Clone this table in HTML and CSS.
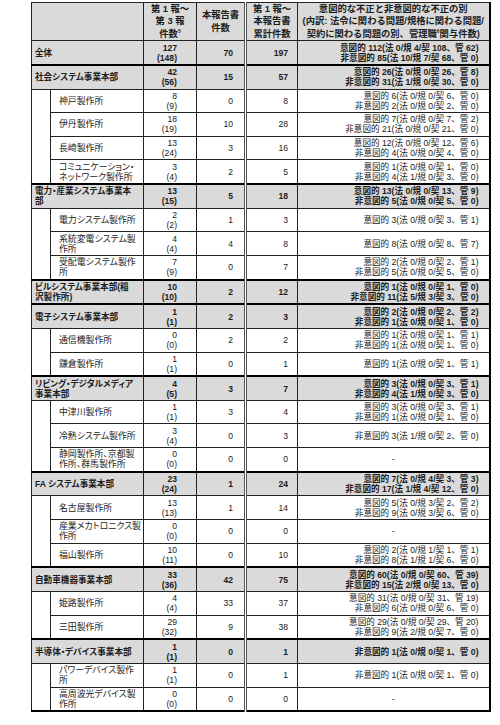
FILE: index.html
```html
<!DOCTYPE html>
<html lang="ja">
<head>
<meta charset="utf-8">
<title>不正件数一覧</title>
<link rel="stylesheet" href="styles.css">
</head>
<body>
<table class="report">
  <colgroup>
    <col class="c-indent"><col class="c-name"><col class="c-n1"><col class="c-n2"><col class="c-n3"><col class="c-det">
  </colgroup>
  <thead>
    <tr class="head">
      <th colspan="2"></th>
      <th>第 1 報～<br>第 3 報<br>件数<sup class="fn">5</sup></th>
      <th>本報告書<br>件数</th>
      <th class="n3">第 1 報～<br>本報告書<br>累計件数</th>
      <th>意図的な不正と非意図的な不正の別<br>(内訳: 法令に関わる問題/規格に関わる問題/<br>契約に関わる問題の別、管理職<sup class="fn">6</sup>関与件数)</th>
    </tr>
  </thead>
  <tbody>
    <tr class="grp">
      <td colspan="2" class="gname">全体</td>
      <td class="n1">127<br>(148)</td><td class="n2">70</td><td class="n3">197</td>
      <td class="det">意図的 112(法 0/規 4/契 108、管 62)<br>非意図的 85(法 10/規 7/契 68、管 0)</td>
    </tr>

    <tr class="grp sep">
      <td colspan="2" class="gname">社会システム事業本部</td>
      <td class="n1">42<br>(56)</td><td class="n2">15</td><td class="n3">57</td>
      <td class="det">意図的 26(法 0/規 0/契 26、管 8)<br>非意図的 31(法 1/規 0/契 30、管 0)</td>
    </tr>
    <tr class="sub">
      <td class="indent" rowspan="4"></td>
      <td class="sname">神戸製作所</td>
      <td class="n1">8<br>(9)</td><td class="n2">0</td><td class="n3">8</td>
      <td class="det">意図的 6(法 0/規 0/契 6、管 0)<br>非意図的 2(法 0/規 0/契 2、管 0)</td>
    </tr>
    <tr class="sub">
      <td class="sname">伊丹製作所</td>
      <td class="n1">18<br>(19)</td><td class="n2">10</td><td class="n3">28</td>
      <td class="det">意図的 7(法 0/規 0/契 7、管 2)<br>非意図的 21(法 0/規 0/契 21、管 0)</td>
    </tr>
    <tr class="sub">
      <td class="sname">長崎製作所</td>
      <td class="n1">13<br>(24)</td><td class="n2">3</td><td class="n3">16</td>
      <td class="det">意図的 12(法 0/規 0/契 12、管 6)<br>非意図的 4(法 0/規 0/契 4、管 0)</td>
    </tr>
    <tr class="sub">
      <td class="sname">コミュニケーション・<br>ネットワーク製作所</td>
      <td class="n1">3<br>(4)</td><td class="n2">2</td><td class="n3">5</td>
      <td class="det">意図的 1(法 0/規 0/契 1、管 0)<br>非意図的 4(法 1/規 0/契 3、管 0)</td>
    </tr>

    <tr class="grp sep">
      <td colspan="2" class="gname">電力・産業システム事業本<br>部</td>
      <td class="n1">13<br>(15)</td><td class="n2">5</td><td class="n3">18</td>
      <td class="det">意図的 13(法 0/規 0/契 13、管 9)<br>非意図的 5(法 0/規 0/契 5、管 0)</td>
    </tr>
    <tr class="sub">
      <td class="indent" rowspan="3"></td>
      <td class="sname">電力システム製作所</td>
      <td class="n1">2<br>(2)</td><td class="n2">1</td><td class="n3">3</td>
      <td class="det">意図的 3(法 0/規 0/契 3、管 1)</td>
    </tr>
    <tr class="sub">
      <td class="sname">系統変電システム製<br>作所</td>
      <td class="n1">4<br>(4)</td><td class="n2">4</td><td class="n3">8</td>
      <td class="det">意図的 8(法 0/規 0/契 8、管 7)</td>
    </tr>
    <tr class="sub">
      <td class="sname">受配電システム製作<br>所</td>
      <td class="n1">7<br>(9)</td><td class="n2">0</td><td class="n3">7</td>
      <td class="det">意図的 2(法 0/規 0/契 2、管 1)<br>非意図的 5(法 0/規 0/契 5、管 0)</td>
    </tr>

    <tr class="grp sep">
      <td colspan="2" class="gname">ビルシステム事業本部(稲<br>沢製作所)</td>
      <td class="n1">10<br>(10)</td><td class="n2">2</td><td class="n3">12</td>
      <td class="det">意図的 1(法 0/規 0/契 1、管 0)<br>非意図的 11(法 5/規 3/契 3、管 0)</td>
    </tr>

    <tr class="grp sep">
      <td colspan="2" class="gname">電子システム事業本部</td>
      <td class="n1">1<br>(1)</td><td class="n2">2</td><td class="n3">3</td>
      <td class="det">意図的 2(法 0/規 0/契 2、管 2)<br>非意図的 1(法 0/規 0/契 1、管 0)</td>
    </tr>
    <tr class="sub">
      <td class="indent" rowspan="2"></td>
      <td class="sname">通信機製作所</td>
      <td class="n1">0<br>(0)</td><td class="n2">2</td><td class="n3">2</td>
      <td class="det">意図的 1(法 0/規 0/契 1、管 1)<br>非意図的 1(法 0/規 0/契 1、管 0)</td>
    </tr>
    <tr class="sub">
      <td class="sname">鎌倉製作所</td>
      <td class="n1">1<br>(1)</td><td class="n2">0</td><td class="n3">1</td>
      <td class="det">意図的 1(法 0/規 0/契 1、管 1)</td>
    </tr>

    <tr class="grp sep">
      <td colspan="2" class="gname">リビング・デジタルメディア<br>事業本部</td>
      <td class="n1">4<br>(5)</td><td class="n2">3</td><td class="n3">7</td>
      <td class="det">意図的 3(法 0/規 0/契 3、管 1)<br>非意図的 4(法 1/規 0/契 3、管 0)</td>
    </tr>
    <tr class="sub">
      <td class="indent" rowspan="3"></td>
      <td class="sname">中津川製作所</td>
      <td class="n1">1<br>(1)</td><td class="n2">3</td><td class="n3">4</td>
      <td class="det">意図的 3(法 0/規 0/契 3、管 1)<br>非意図的 1(法 0/規 0/契 1、管 0)</td>
    </tr>
    <tr class="sub">
      <td class="sname">冷熱システム製作所</td>
      <td class="n1">3<br>(4)</td><td class="n2">0</td><td class="n3">3</td>
      <td class="det">非意図的 3(法 1/規 0/契 2、管 0)</td>
    </tr>
    <tr class="sub">
      <td class="sname">静岡製作所、京都製<br>作所、群馬製作所</td>
      <td class="n1">0<br>(0)</td><td class="n2">0</td><td class="n3">0</td>
      <td class="det none">-</td>
    </tr>

    <tr class="grp sep">
      <td colspan="2" class="gname">FA システム事業本部</td>
      <td class="n1">23<br>(24)</td><td class="n2">1</td><td class="n3">24</td>
      <td class="det">意図的 7(法 0/規 4/契 3、管 3)<br>非意図的 17(法 1/規 4/契 12、管 0)</td>
    </tr>
    <tr class="sub">
      <td class="indent" rowspan="3"></td>
      <td class="sname">名古屋製作所</td>
      <td class="n1">13<br>(13)</td><td class="n2">1</td><td class="n3">14</td>
      <td class="det">意図的 5(法 0/規 3/契 2、管 2)<br>非意図的 9(法 0/規 3/契 6、管 0)</td>
    </tr>
    <tr class="sub">
      <td class="sname">産業メカトロニクス製<br>作所</td>
      <td class="n1">0<br>(0)</td><td class="n2">0</td><td class="n3">0</td>
      <td class="det none">-</td>
    </tr>
    <tr class="sub">
      <td class="sname">福山製作所</td>
      <td class="n1">10<br>(11)</td><td class="n2">0</td><td class="n3">10</td>
      <td class="det">意図的 2(法 0/規 1/契 1、管 1)<br>非意図的 8(法 1/規 1/契 6、管 0)</td>
    </tr>

    <tr class="grp sep">
      <td colspan="2" class="gname">自動車機器事業本部</td>
      <td class="n1">33<br>(36)</td><td class="n2">42</td><td class="n3">75</td>
      <td class="det">意図的 60(法 0/規 0/契 60、管 39)<br>非意図的 15(法 2/規 0/契 13、管 0)</td>
    </tr>
    <tr class="sub">
      <td class="indent" rowspan="2"></td>
      <td class="sname">姫路製作所</td>
      <td class="n1">4<br>(4)</td><td class="n2">33</td><td class="n3">37</td>
      <td class="det">意図的 31(法 0/規 0/契 31、管 19)<br>非意図的 6(法 0/規 0/契 6、管 0)</td>
    </tr>
    <tr class="sub">
      <td class="sname">三田製作所</td>
      <td class="n1">29<br>(32)</td><td class="n2">9</td><td class="n3">38</td>
      <td class="det">意図的 29(法 0/規 0/契 29、管 20)<br>非意図的 9(法 2/規 0/契 7、管 0)</td>
    </tr>

    <tr class="grp sep">
      <td colspan="2" class="gname">半導体・デバイス事業本部</td>
      <td class="n1">1<br>(1)</td><td class="n2">0</td><td class="n3">1</td>
      <td class="det">非意図的 1(法 0/規 0/契 1、管 0)</td>
    </tr>
    <tr class="sub">
      <td class="indent" rowspan="2"></td>
      <td class="sname">パワーデバイス製作<br>所</td>
      <td class="n1">1<br>(1)</td><td class="n2">0</td><td class="n3">1</td>
      <td class="det">非意図的 1(法 0/規 0/契 1、管 0)</td>
    </tr>
    <tr class="sub">
      <td class="sname">高周波光デバイス製<br>作所</td>
      <td class="n1">0<br>(0)</td><td class="n2">0</td><td class="n3">0</td>
      <td class="det none">-</td>
    </tr>
  </tbody>
</table>
</body>
</html>
```

FILE: styles.css
```css
html, body {
  margin: 0;
  background: #ffffff;
}
body {
  padding: 2px 0 0 31px;
  font-family: "Liberation Sans", "Noto Sans CJK JP", sans-serif;
  color: #1c1c1c;
}
.report {
  border-collapse: collapse;
  table-layout: fixed;
  width: 458px;
  font-size: 8.6px;
  line-height: 10px;
  border-right: 2px solid #000;
  border-bottom: 2px solid #000;
}
.c-indent { width: 19px; }
.c-name { width: 93px; }
.c-n1 { width: 53px; }
.c-n2 { width: 49px; }
.c-n3 { width: 52px; }
.c-det { width: 192px; }

.report th,
.report td {
  border: 1px solid #222;
  padding: 0;
  vertical-align: middle;
  white-space: nowrap;
  overflow: hidden;
}
.head th {
  background: #dadada;
  height: 37px;
  font-size: 9.3px;
  line-height: 12.4px;
  font-weight: 700;
  text-align: center;
}
.fn {
  font-size: 5px;
  line-height: 0;
  vertical-align: 4px;
}
.report td { height: 22.65px; }
.grp td {
  background: #dadada;
  font-weight: 700;
}
.sep td { border-top: 2px solid #000; }
.sub td { background: #ffffff; }

.gname {
  padding-left: 3px !important;
  text-align: left;
  font-feature-settings: "palt";
}
.sname {
  padding-left: 8px !important;
  text-align: left;
  font-size: 8.9px;
  font-feature-settings: "palt";
}
.indent { background: #ffffff; }

.n1 { text-align: right; padding-right: 19px !important; }
.n2 { text-align: right; padding-right: 11px !important; }
.report .n3 {
  text-align: right;
  padding-right: 9px;
  border-left: 3px double #555;
}
.head .n3 { padding-right: 0; text-align: center; }
.det { text-align: right; padding-right: 10px !important; }
.det.none { text-align: center; padding-right: 0 !important; }
```
